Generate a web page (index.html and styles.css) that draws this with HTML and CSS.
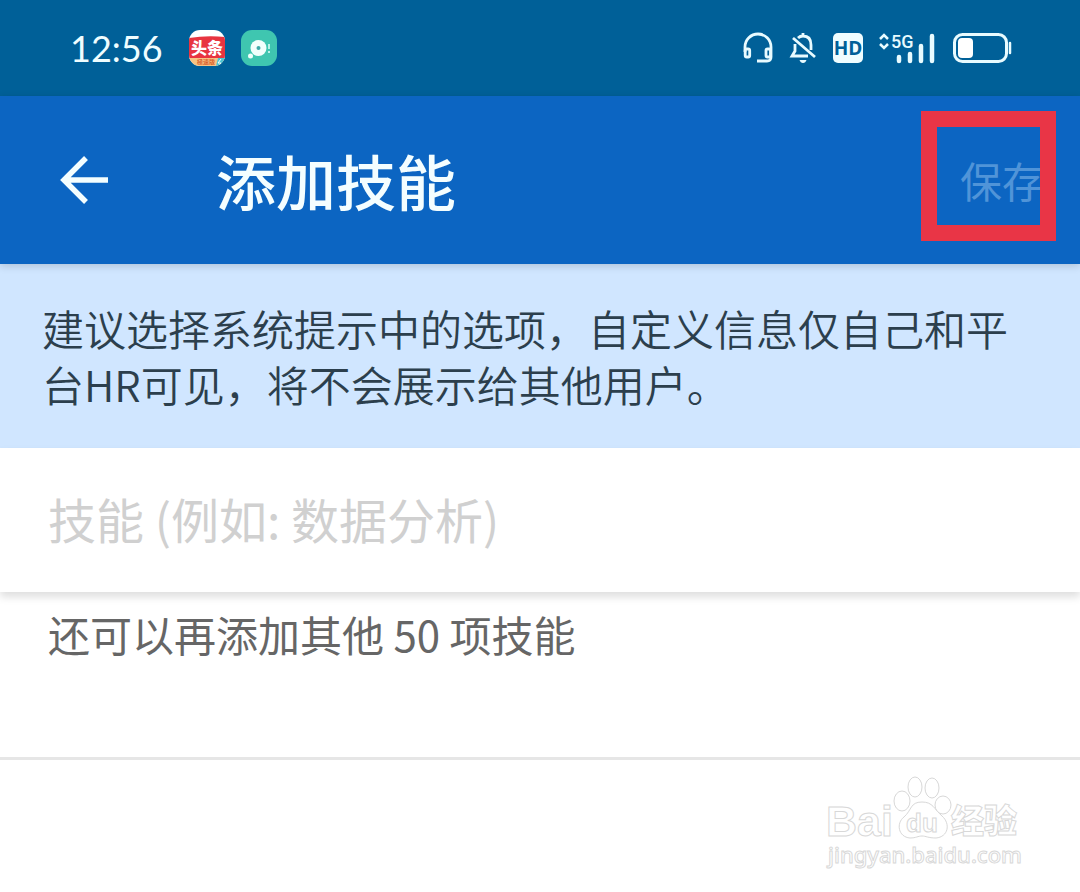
FILE: index.html
```html
<!DOCTYPE html>
<html lang="zh-CN">
<head>
<meta charset="utf-8">
<meta name="viewport" content="width=device-width, initial-scale=1">
<title>添加技能</title>
<link rel="stylesheet" href="styles.css">
</head>
<body>
<div class="status-bar">
  <div class="status-left">
    <span class="clock">12:56</span>
    <svg class="app-icon" viewBox="0 0 36 36" aria-hidden="true">
      <defs><clipPath id="app-shape"><rect width="36" height="36" rx="11"/></clipPath></defs>
      <g clip-path="url(#app-shape)">
        <rect width="36" height="36" fill="#fff"/>
        <path d="M0 8Q18 5 36 7V28H0Z" fill="#e83440"/>
        <rect y="28" width="36" height="8" fill="#f8c483"/>
        <path d="M29 28h7v8h-9z" fill="#4cc5d4"/>
        <path d="M32 29l-3 4h3l-2 3" fill="none" stroke="#fff" stroke-width="1"/>
      </g>
      <text class="app-name" x="18" y="24" text-anchor="middle">头条</text>
      <text class="app-sub" x="17" y="34" text-anchor="middle">極速版</text>
    </svg>
    <svg class="app-icon" viewBox="0 0 36 36" aria-hidden="true">
      <rect width="36" height="36" rx="11" fill="#3fc6b0"/>
      <circle cx="17.500" cy="18" r="8" fill="#f2fffc"/>
      <circle cx="17.500" cy="18" r="2" fill="#3fa9a8"/>
      <circle cx="9.500" cy="26" r="2.500" fill="#f2fffc"/>
      <path d="M28 14v5M28 21v2" stroke="#e4fff9" stroke-width="1.500"/>
    </svg>
  </div>
  <div class="status-right">
    <svg width="30" height="32" viewBox="0 0 30 32" fill="none" stroke="#e8fbff" stroke-width="2.800" aria-hidden="true">
      <path d="M2 20V15a13 13 0 0 1 26 0v10q0 4-4 4H14"/>
      <rect x="2.200" y="17" width="4.500" height="8" rx="1.500"/>
      <rect x="23" y="17" width="4.500" height="8" rx="1.500"/>
    </svg>
    <svg width="28" height="32" viewBox="0 0 28 32" fill="none" stroke="#e8fbff" stroke-width="2.800" aria-hidden="true">
      <path d="M9 6Q11 4 14 4q8 0 8 9v5M6 12v7l-3 5H19M14 1v3M4 6l22 19"/>
      <path d="M10.500 28h7q-1 3-3.500 3t-3.500-3Z" fill="#e8fbff" stroke="none"/>
    </svg>
    <svg width="30" height="32" viewBox="0 0 30 32" aria-hidden="true">
      <rect y="1" width="30" height="30" rx="5" fill="#effdff"/>
      <text class="hd" x="15" y="23" text-anchor="middle">HD</text>
    </svg>
    <svg class="signal" width="58" height="32" viewBox="0 0 58 32" fill="none" stroke="#e8fbff" aria-hidden="true">
      <path d="M1 7l4-4 4 4M1 12l4 4 4-4" stroke-width="2.500"/>
      <text class="network" x="12" y="16">5G</text>
      <path d="M20 25v4M31 22v7M42 14v15M53 4v25" stroke-width="4.500" stroke-linecap="round"/>
    </svg>
    <svg width="60" height="32" viewBox="0 0 60 32" fill="none" aria-hidden="true">
      <rect x="1.500" y="2.500" width="52" height="27" rx="8" stroke="#e8fbff" stroke-width="3"/>
      <rect x="5" y="6" width="15" height="20" rx="4" fill="#fff"/>
      <path d="M57 11v10" stroke="#e8fbff" stroke-width="2.500" stroke-linecap="round"/>
    </svg>
  </div>
</div>

<header class="app-bar">
  <button class="back" type="button" aria-label="返回">
    <svg width="48" height="48" viewBox="0 0 48 48" fill="none" stroke="#f4feff" stroke-width="5.500" aria-hidden="true">
      <path d="M48 24H4M26 2L4 24l22 22"/>
    </svg>
  </button>
  <h1 class="title">添加技能</h1>
  <div class="action">
    <button class="save" type="button" disabled>保存</button>
    <span class="highlight"></span>
  </div>
</header>

<main>
  <p class="notice">建议选择系统提示中的选项，自定义信息仅自己和平台HR可见，将不会展示给其他用户。</p>
  <div class="field">
    <input class="skill-input" type="text" aria-label="技能" placeholder="技能 (例如: 数据分析)">
  </div>
  <p class="remaining">还可以再添加其他 50 项技能</p>
</main>

<footer class="footer">
  <svg class="watermark" width="200" height="96" viewBox="0 0 200 96" role="img" aria-label="Baidu 经验">
    <text class="wm-brand" x="6" y="60">Bai</text>
    <path d="M102 26c-12 0-10 8-18 15-8 6-6 20 6 21 6 0 8-2 12-2s6 2 14 2c12-1 15-14 6-22-8-7-9-14-20-14Z"/>
    <ellipse cx="82" cy="25" rx="8" ry="10"/>
    <ellipse cx="95" cy="11" rx="7" ry="10"/>
    <ellipse cx="112" cy="12" rx="7" ry="10"/>
    <ellipse cx="123" cy="29" rx="8" ry="9"/>
    <text class="wm-du" x="102" y="56" text-anchor="middle">du</text>
    <text class="wm-cn" x="131" y="57">经验</text>
    <text class="wm-url" x="8" y="87">jingyan.baidu.com</text>
  </svg>
</footer>
</body>
</html>
```
FILE: styles.css
```css
* {
  box-sizing: border-box;
}

body {
  margin: 0;
  background: #fff;
  font-family: "Noto Sans CJK SC", "Noto Sans", sans-serif;
}

button {
  padding: 0;
  border: 0;
  background: none;
  font: inherit;
}

.status-bar {
  display: flex;
  align-items: center;
  justify-content: space-between;
  height: 96px;
  padding: 0 67px 0 70px;
  background: #006098;
}

.status-left {
  display: flex;
  align-items: center;
  gap: 16px;
}

.clock {
  margin-right: 10px;
  color: #effdff;
  font-family: Lato, sans-serif;
  font-size: 36px;
  line-height: 48px;
}

.app-icon {
  width: 36px;
  height: 36px;
}

.app-name {
  fill: #fff;
  font-size: 16px;
  font-weight: 900;
}

.app-sub {
  fill: #d9622f;
  font-size: 6px;
  font-weight: 700;
}

.status-right {
  display: flex;
  align-items: center;
  gap: 16px;
}

.signal {
  overflow: visible;
}

.hd {
  fill: #006098;
  font-family: "Open Sans", sans-serif;
  font-size: 19px;
  font-weight: 700;
}

.network {
  fill: #e8fbff;
  stroke: none;
  font-family: Roboto, sans-serif;
  font-size: 18px;
  font-weight: 500;
}

.app-bar {
  position: relative;
  z-index: 1;
  display: flex;
  align-items: center;
  height: 168px;
  padding: 0 36px 0 60px;
  background: #0c65c2;
  box-shadow: 0 2px 8px rgba(0, 0, 0, 0.16);
}

.back {
  display: flex;
}

.title {
  flex: 1;
  margin: 0 0 0 108px;
  color: #f4feff;
  font-size: 60px;
  font-weight: 500;
  line-height: 84px;
}

.action {
  position: relative;
}

.save {
  color: #5094d8;
  font-size: 42px;
  line-height: 60px;
}

.highlight {
  position: absolute;
  top: -39px;
  right: -12px;
  width: 135px;
  height: 130px;
  border: 16px solid #e93546;
  pointer-events: none;
}

.notice {
  margin: 0;
  padding: 36px 72px 36px 42px;
  background: #d0e6ff;
  color: #2c3f4d;
  font-size: 42px;
  font-weight: 350;
  line-height: 56px;
}

.field {
  height: 144px;
  background: #fff;
  box-shadow: 0 5px 8px rgba(0, 0, 0, 0.13);
}

.skill-input {
  display: block;
  width: 100%;
  height: 100%;
  padding: 0 48px 4px;
  border: 0;
  outline: 0;
  background: none;
  color: #333;
  font-family: "Noto Sans CJK SC", sans-serif;
  font-size: 48px;
  font-weight: 400;
}

.skill-input::placeholder {
  color: #d0d0d0;
  opacity: 1;
}

.remaining {
  margin: 0;
  padding: 12px 48px 93px;
  border-bottom: 3px solid #e6e6e6;
  color: #666;
  font-size: 42px;
  font-weight: 400;
  line-height: 60px;
}

.footer {
  display: flex;
  justify-content: flex-end;
  padding: 16px 60px 16px 0;
}

.watermark {
  overflow: visible;
  fill: #fff;
  stroke: #d8d8d8;
  stroke-width: 1;
}

.wm-brand {
  font-family: "Liberation Sans", sans-serif;
  font-size: 43px;
  font-weight: 700;
}

.wm-du {
  font-family: "Liberation Sans", sans-serif;
  font-size: 26px;
  font-weight: 700;
}

.wm-cn {
  font-size: 33px;
  font-weight: 900;
}

.wm-url {
  font-family: "Noto Sans", sans-serif;
  font-size: 22px;
  font-weight: 500;
}
```
